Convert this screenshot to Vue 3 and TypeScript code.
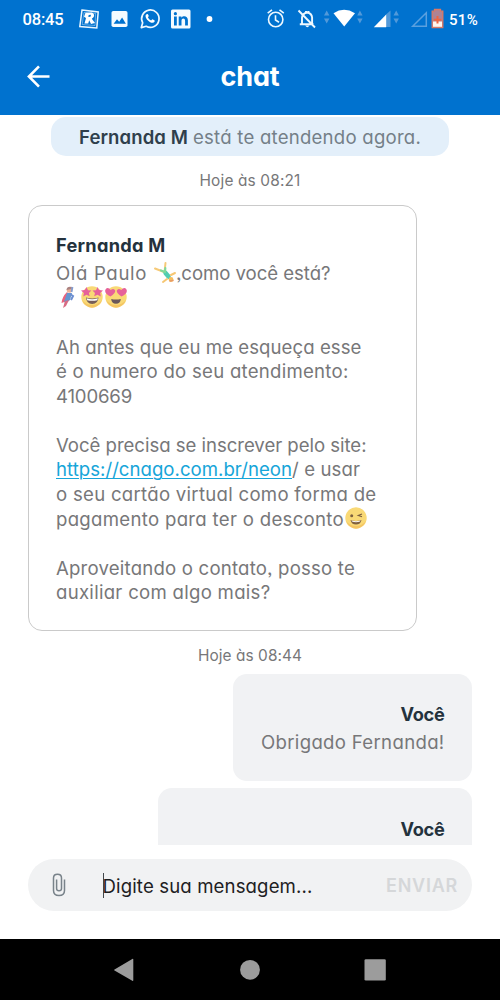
<script setup lang="ts">
import type { Directive } from 'vue'

// Spreads the letters of a line so that it takes up the given width.
const vFit: Directive<HTMLElement, number> = {
  mounted(el, { value }) {
    const count = (el.textContent ?? '').length
    const natural = el.getBoundingClientRect().width
    el.style.letterSpacing = `${(value - natural) / count}px`
  },
}

type Emoji = 'cartwheel' | 'hero' | 'stars' | 'hearts' | 'wink'
interface Piece { text?: string; width?: number; emoji?: Emoji; link?: boolean }

const lines: Piece[][] = [
  [{ text: 'Olá Paulo', width: 91 }, { emoji: 'cartwheel' }, { text: ',como você está?', width: 154.5 }],
  [{ emoji: 'hero' }, { emoji: 'stars' }, { emoji: 'hearts' }],
  [],
  [{ text: 'Ah antes que eu me esqueça esse', width: 305.5 }],
  [{ text: 'é o numero do seu atendimento:', width: 292.5 }],
  [{ text: '4100669', width: 76 }],
  [],
  [{ text: 'Você precisa se inscrever pelo site:', width: 310.5 }],
  [{ text: 'https://cnago.com.br/neon', width: 236, link: true }, { text: '/ e usar', width: 68 }],
  [{ text: 'o seu cartão virtual como forma de', width: 320.5 }],
  [{ text: 'pagamento para ter o desconto', width: 288 }, { emoji: 'wink' }],
  [],
  [{ text: 'Aproveitando o contato, posso te', width: 299 }],
  [{ text: 'auxiliar com algo mais?', width: 214.5 }],
]
</script>

<template>
  <div class="phone">
    <header class="top">
      <svg class="status" viewBox="0 0 500 38" aria-hidden="true">
        <g fill="none" stroke="#e9f6ff" stroke-width="1.5">
          <path d="M82 10L98.200 12L96.800 28L79.800 26.500Z" />
          <path d="M84 12.500L95.600 13.500L95 25.500L82.200 24.500Z" stroke-width=".7" opacity=".6" />
        </g>
        <path d="M84.500 23.500L86 18L84 16.800L85.500 12.800L92 12.500Q95.300 14.500 93.500 17.300L91.800 18.800L95 23L91 24L89.200 20.200L88.200 23.600Z" fill="#fff" />
        <path d="M88.700 15L91 14.800L90.500 16.800L88.300 17Z" fill="#0072cf" />
        <rect x="111.500" y="11" width="16" height="16" rx="1.800" fill="#f4fbff" />
        <path d="M113.600 23.700L117 19.300L119.200 21.700L122.100 17.600L125.900 23.700Z" fill="#0072cf" />
        <path d="M141.300 27.600L142.700 22.800A8.700 8.700 0 1 1 146.200 26.300Z" fill="none" stroke="#eef8ff" stroke-width="1.700" stroke-linejoin="round" />
        <path d="M146.500 14.200C144.800 15.200 145.600 18.200 148 20.500C150.400 22.900 153.300 23.700 154.600 21.700L154.500 20.300L152.300 19.300L151.100 20.500Q148.800 19.600 147.900 17.300L148.800 16.100L147.800 14.100Z" fill="#fff" />
        <rect x="171" y="9.500" width="19.500" height="19" rx="1.500" fill="#f5fbff" />
        <g fill="#0072cf">
          <circle cx="175.400" cy="13.700" r="1.600" />
          <path d="M174 16.500h2.800v9H174zM178.700 16.500h2.700v1.300c2-2.600 6.500-1.700 6.500 2.500v5.200h-2.800v-4.700c0-3-3.600-2.900-3.600 0v4.700h-2.800z" />
        </g>
        <circle cx="209.500" cy="19" r="2.900" fill="#fff" />
        <g fill="none" stroke="#edf8ff" stroke-width="1.600">
          <circle cx="275.700" cy="19.500" r="7.200" />
          <path d="M275.500 15.200V20L279 22.200M267.700 13.200L272 9.900M279.500 9.900L283.800 13.200" />
        </g>
        <path d="M302 24.500V17.500Q302.300 13.500 307.300 12.500Q311.800 13.500 312.100 17.500V24.500M299.800 24.300H313.500M298.500 10.500L315 27.500M306 11V12M308.500 11V12" fill="none" stroke="#edf8ff" stroke-width="1.900" />
        <path d="M305.200 25.500H309.500Q307.300 29 305.200 25.500Z" fill="#edf8ff" />
        <g fill="#5299d9">
          <path d="M324 15.500L326.700 10.500L329.400 15.500ZM324 18.500L326.700 23.500L329.400 18.500Z" />
          <path d="M357.200 15.500L359.900 10.500L362.600 15.500ZM357.200 18.500L359.900 23.500L362.600 18.500Z" />
          <path d="M393.500 15.500L396.200 10.500L398.900 15.500ZM393.500 18.500L396.200 23.500L398.900 18.500Z" />
          <path d="M386 14.500L390.500 10.500V27H386Z" />
        </g>
        <path d="M333.500 13.200Q344 6.500 355 13.200L344.200 26.500Z" fill="#fff" />
        <path d="M373.800 27.200L386.200 14.500V27.200Z" fill="#fff" />
        <path d="M412.700 26.300L426.300 12.800V26.300Z" fill="none" stroke="#5aa0df" stroke-width="1.500" />
        <path d="M434.500 9.500H440.500V11.200H442.800V27.500H432.200V11.200H434.500Z" fill="#ae8394" stroke="#db7965" stroke-width="1.300" />
        <path d="M433 21.500H442V26.800H433Z" fill="#fff5ef" />
        <path d="M437.500 16V23.500M433.800 19.700H441.200" stroke="#ee6542" stroke-width="2" />
      </svg>
      <span class="clock"><span v-fit="41">08:45</span></span>
      <span class="battery"><span v-fit="29">51%</span></span>
      <div class="titlebar">
        <svg class="back" viewBox="0 0 24 24"><path d="M23.500 12H2.500M12.500 1.500L2 12L12.500 22.500" /></svg>
        <h1><span v-fit="59">chat</span></h1>
      </div>
    </header>

    <main class="chat">
      <div class="notice">
        <b v-fit="109">Fernanda M</b>
        <span v-fit="228">está te atendendo agora.</span>
      </div>
      <div class="time first"><span v-fit="101">Hoje às 08:21</span></div>

      <section class="card">
        <div class="name"><span v-fit="109.5">Fernanda M</span></div>
        <div v-for="(line, i) in lines" :key="i" class="line">
          <template v-for="(piece, j) in line" :key="j">
            <span v-if="piece.text" v-fit="piece.width ?? 0" :class="{ link: piece.link }">{{ piece.text }}</span>
            <svg v-else class="emoji" :class="piece.emoji" viewBox="0 0 24 24">
              <g v-if="piece.emoji === 'cartwheel'" fill="none" stroke-linecap="round">
                <path d="M11 11L2 7.500M11.500 11L12.500 2" stroke="#f6ca78" stroke-width="2" />
                <path d="M12.500 12L15.500 15.500" stroke="#51ccb1" stroke-width="4.500" />
                <path d="M12 11L8 9.500M12 11L12.300 7" stroke="#7ed99a" stroke-width="2.200" />
                <path d="M14 18L10 21M18 14L22 12" stroke="#f6c773" stroke-width="2" />
                <circle cx="18" cy="18.500" r="2.400" fill="#f5be61" />
                <path d="M17 20L20 19.500" stroke="#e79b64" stroke-width="1.500" />
              </g>
              <g v-else-if="piece.emoji === 'hero'">
                <path d="M11 7Q6 12 5.500 18L11 16L14 10Z" fill="#e9647e" />
                <path d="M11 8L16 8L14 15L10 18L8 17Z" fill="#6596d0" />
                <path d="M9 16L7 23L10 21L13 15Z" fill="#d86b83" />
                <path d="M14 9L17 11L15 15" fill="none" stroke="#6d8ed0" stroke-width="2" />
                <circle cx="13.500" cy="5" r="2.800" fill="#edb295" />
                <path d="M10.500 5Q11 .800 16 2L15.500 4Z" fill="#a98181" />
                <path d="M15.500 7L16.500 2" stroke="#829dd0" stroke-width="1.800" />
              </g>
              <g v-else>
                <circle cx="12" cy="12" r="10.700" fill="#f9d976" />
                <path d="M2 15Q5 22 12 22.700Q19 22 22 15Q18 20 12 20Q6 20 2 15Z" fill="#f1b957" opacity=".65" />
                <template v-if="piece.emoji === 'stars'">
                  <path d="M6 12.500Q12 14.500 18.500 12.500Q18 19 12.200 19Q6.500 19 6 12.500Z" fill="#765e59" />
                  <path d="M6.700 13.300Q12 15 17.800 13.300L17.300 15.200Q12 16.300 7.200 15.200Z" fill="#fff" />
                  <path d="M6.500 2L8 5.300L11.400 5.500L8.900 7.900L9.700 11.300L6.500 9.700L3.200 11.500L3.900 7.900L1 5.400L4.800 5ZM17.500 2L19 5L23 5.400L20.200 7.900L20.800 11.500L17.500 9.700L14.200 11.300L15 7.900L12.500 5.500L16 5.300Z" fill="#e6619a" />
                </template>
                <template v-else-if="piece.emoji === 'hearts'">
                  <path d="M6.500 11.500Q-.200 8 1.500 4.500Q3.800 1.500 6.700 5Q9.800 2.600 11.200 5.500Q11.700 8 6.500 11.500ZM17.500 11.500Q12.300 8 12.800 5.500Q14.200 2.600 17.300 5Q20.200 1.500 22.500 4.500Q24.200 8 17.500 11.500Z" fill="#e6619a" />
                  <path d="M7.200 14Q12 15.200 16.800 14Q16.500 18.700 12 18.700Q7.500 18.700 7.200 14Z" fill="#69575a" />
                </template>
                <template v-else>
                  <circle cx="7.700" cy="9.700" r="1.500" fill="#7d6040" />
                  <path d="M18 8L14.300 9.500L18 10.800" fill="none" stroke="#7d6040" stroke-width="1.200" />
                  <path d="M6.500 14Q12 16 17.500 14Q16.500 18.500 12 18.500Q7.500 18.500 6.500 14Z" fill="#80603f" />
                  <path d="M7.500 14.500Q12 16 16.500 14.500L16 15.600Q12 16.800 8 15.600Z" fill="#fff" />
                </template>
              </g>
            </svg>
          </template>
        </div>
      </section>

      <div class="time second"><span v-fit="104">Hoje às 08:44</span></div>
      <section class="mine">
        <div class="name"><span v-fit="44">Você</span></div>
        <div class="line"><span v-fit="183.5">Obrigado Fernanda!</span></div>
      </section>
      <section class="mine wide">
        <div class="name"><span v-fit="44">Você</span></div>
      </section>
    </main>

    <footer class="composer">
      <svg class="clip" viewBox="0 0 14 24">
        <path d="M12.500 6.500V17.500Q12.500 22.500 7 22.500Q1.500 22.500 1.500 17.500V5Q1.500 1.300 5.500 1.300Q9.500 1.300 9.500 5V15.500Q9.500 17.800 7 17.800Q4.600 17.800 4.600 15.500V6.500" />
      </svg>
      <span class="caret"></span>
      <span class="placeholder"><span v-fit="210">Digite sua mensagem...</span></span>
      <span class="send"><span v-fit="72">ENVIAR</span></span>
    </footer>

    <nav class="keys">
      <svg viewBox="0 0 500 61" aria-hidden="true">
        <g fill="#9c9c9c">
          <path d="M114.500 30.500L132.300 20Q133.300 19.500 133.300 20.500V41Q133.300 42.300 132.300 41.700L114.500 31.500Q113.500 31 114.500 30.500Z" />
          <circle cx="250" cy="30.800" r="9.900" />
          <rect x="364.500" y="20.200" width="21.300" height="21.300" rx="1.300" />
        </g>
      </svg>
    </nav>
  </div>
</template>

<style>
body {
  margin: 0;
  background: #fff;
}
</style>

<style scoped>
.phone {
  width: 500px;
  height: 1000px;
  overflow: hidden;
  display: flex;
  flex-direction: column;
  background: #fff;
  color: #777779;
  font: 400 18.600px/24.54px Inter, "Open Sans", sans-serif;
  font-feature-settings: "cv11", "ss03";
  white-space: pre;
}
.phone span,
.phone b {
  display: inline-block;
}
.top {
  position: relative;
  flex: none;
  height: 115px;
  background: #0072cf;
  color: #fff;
}
.status {
  display: block;
  width: 500px;
  height: 38px;
}
.clock,
.battery {
  position: absolute;
  top: 8px;
  font: 500 16.500px/24px Roboto, sans-serif;
}
.clock {
  left: 22.500px;
}
.battery {
  left: 449px;
  font-size: 15px;
}
.titlebar {
  display: flex;
  align-items: center;
  height: 77px;
}
.back {
  width: 23px;
  height: 23px;
  margin-left: 27px;
  fill: none;
  stroke: #fff;
  stroke-width: 2.700;
}
h1 {
  flex: 1;
  margin: 1px 50px 0 0;
  text-align: center;
  font-size: 27px;
  line-height: 40px;
  font-weight: 700;
}
.chat {
  flex: none;
  box-sizing: border-box;
  height: 729.500px;
  padding: 2px 28px 0;
  overflow: hidden;
  display: flex;
  flex-direction: column;
}
.notice {
  flex: none;
  display: flex;
  gap: 5px;
  box-sizing: border-box;
  width: 397.500px;
  height: 38.500px;
  margin: 0 0 0 23px;
  padding: 8px 0 0 28px;
  border-radius: 15px;
  background: #e3effa;
  color: #747f88;
}
.notice b {
  font-weight: 600;
  color: #2f3f4c;
}
.time {
  flex: none;
  text-align: center;
  font-size: 15.400px;
  line-height: 20px;
}
.first {
  margin-top: 15.500px;
}
.second {
  margin-top: 15px;
}
.card {
  flex: none;
  box-sizing: border-box;
  width: 388.500px;
  height: 426px;
  margin-top: 14px;
  padding: 27.200px 27px 0;
  border: 1.500px solid #cacaca;
  border-radius: 14px;
}
.name {
  height: 28px;
  font-weight: 700;
  font-size: 18.200px;
  color: #24323d;
}
.line {
  display: flex;
  height: 24.540px;
}
.link {
  color: #16a5d9;
  text-decoration: underline;
  text-decoration-thickness: 1px;
  text-underline-offset: 2px;
}
.emoji {
  flex: none;
  width: 24px;
  height: 24px;
  margin-top: -.700px;
}
.cartwheel {
  margin: -.700px -1px 0 6px;
}
.stars {
  margin-left: -.300px;
}
.mine {
  flex: none;
  align-self: flex-end;
  box-sizing: border-box;
  width: 239.500px;
  height: 107px;
  margin-top: 7.500px;
  padding: 28.500px 27.500px 0;
  border-radius: 14px;
  background: #f1f2f4;
  text-align: right;
}
.mine .line {
  justify-content: flex-end;
}
.wide {
  width: 314.500px;
}
.composer {
  flex: none;
  display: flex;
  align-items: center;
  box-sizing: border-box;
  width: 444px;
  height: 52px;
  margin: 14.500px 28px 27.500px;
  padding-left: 24px;
  border-radius: 26px;
  background: #f1f2f3;
}
.clip {
  width: 14px;
  height: 24px;
  fill: none;
  stroke: #79838a;
  stroke-width: 1.500;
}
.caret {
  width: 1.500px;
  height: 25px;
  margin-left: 36.500px;
  background: #42484c;
}
.placeholder {
  margin: 2px 0 0 -1.500px;
  color: #1d2022;
}
.send {
  margin: 2px 0 0 73.500px;
  font-size: 18px;
  font-weight: 600;
  color: #d5d7d9;
}
.keys {
  flex: none;
  height: 61.500px;
  background: #000;
}
.keys svg {
  display: block;
  width: 500px;
  height: 61px;
}
</style>
